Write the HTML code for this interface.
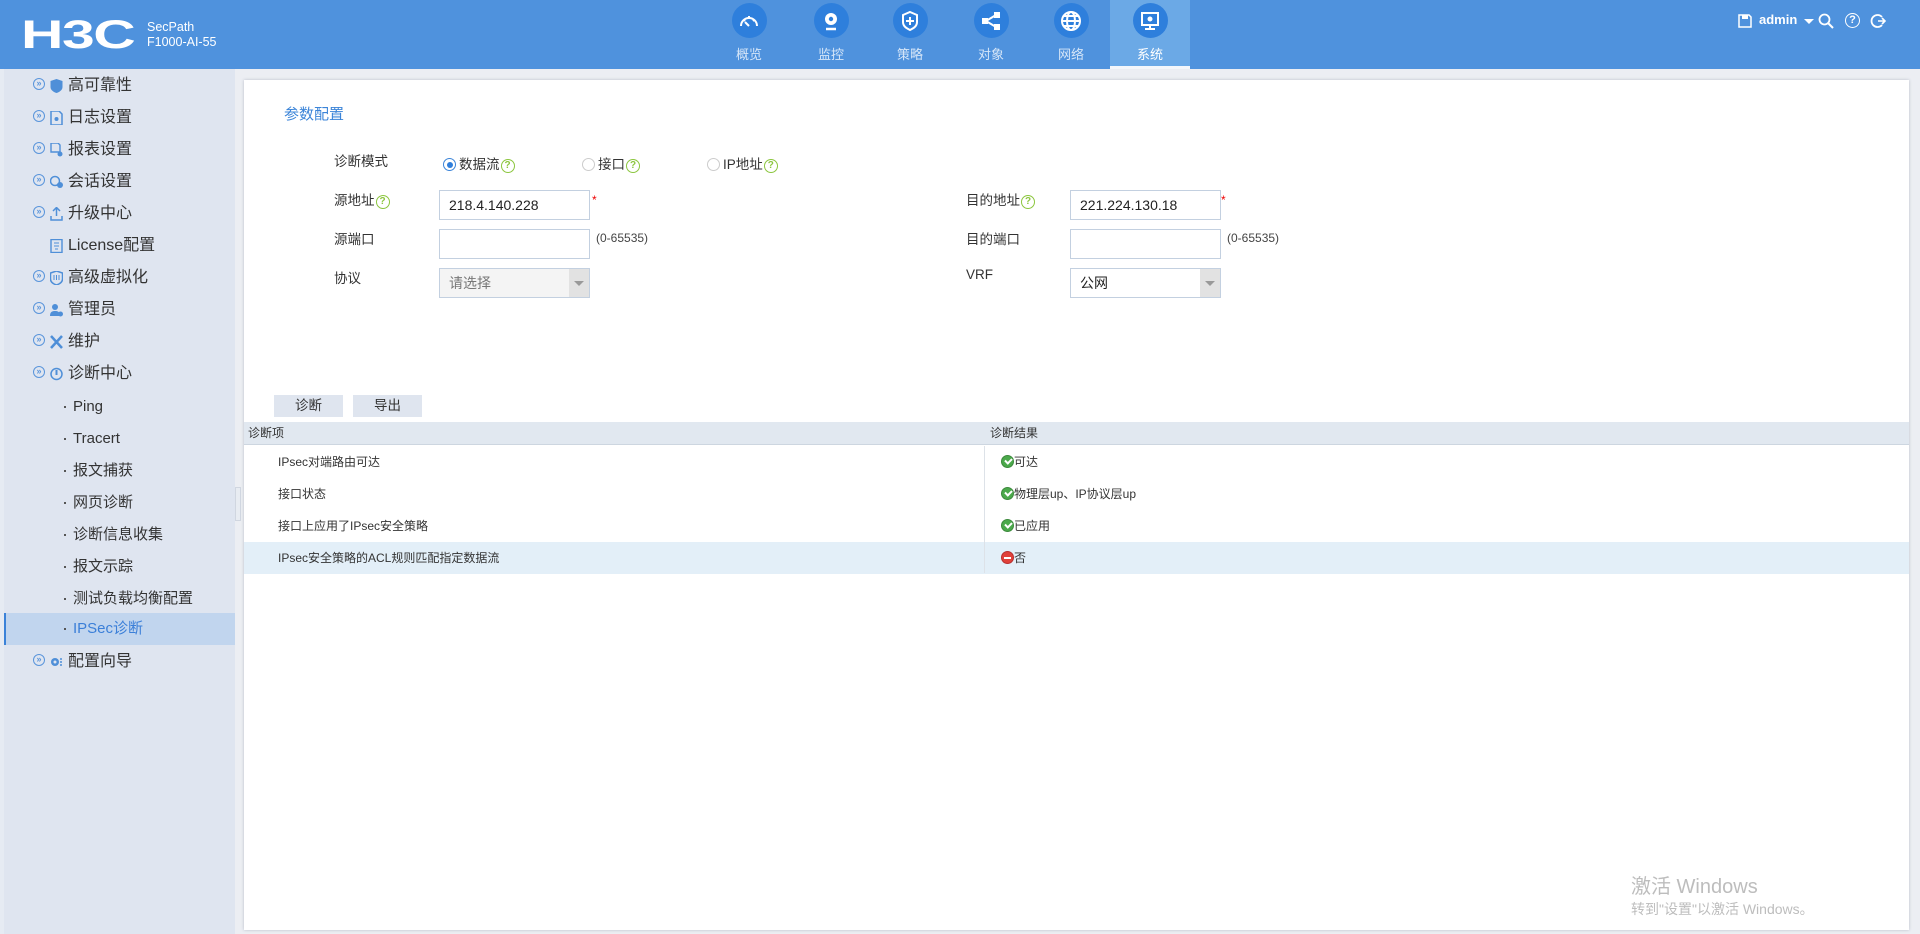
<!DOCTYPE html>
<html><head><meta charset="utf-8">
<style>
*{margin:0;padding:0;box-sizing:border-box}
body{width:1920px;height:934px;overflow:hidden;background:#eceef3;font-family:"Liberation Sans","Noto Sans CJK SC",sans-serif;color:#333;position:relative}
.hdr{position:absolute;left:0;top:0;width:1920px;height:69px;background:#4f92dd}
.abs{position:absolute}
.logo{left:21px;top:13px;font:bold 40px "Liberation Sans",sans-serif;color:#fff;letter-spacing:-1px;transform:scaleX(1.47);transform-origin:left}
.sp{left:147px;top:20px;color:#fff;font-size:12.5px;line-height:15px}
.nav{top:0;width:80px;height:69px;text-align:center;color:#d6e6f8;font-size:13px}
.nav .c{width:35px;height:35px;border-radius:50%;background:#2e7fdc;margin:3px auto 0;display:flex;align-items:center;justify-content:center}
.nav .t{margin-top:6px}
.nav.act{background:#6ba9e6;color:#fff;border-bottom:3px solid #f4f7fb}
.side{left:0;top:69px;width:235px;height:865px;background:#dfe5f0}
.it{position:absolute;left:0;width:235px;height:32px;font-size:16px;line-height:32px;color:#333}
.it .a{position:absolute;left:33px;top:8px;width:12px;height:12px;border:1.3px solid #5a95db;border-radius:50%;font-size:9px;line-height:9px;text-align:center;color:#5a95db;font-weight:bold}
.it .i{position:absolute;left:50px;top:9px;width:13px;height:14px}
.it .x{position:absolute;left:68px}
.sub{font-size:15px}
.sub .x{left:73px}
.sub .d{position:absolute;left:64px;top:15px;width:2px;height:2px;background:#555}
.main{left:244px;top:80px;width:1665px;height:850px;background:#fff;box-shadow:0 0 3px #b8bec8}
.lbl{font-size:13.5px;color:#333}
.inp{background:#fff;border:1px solid #c3d0e0;height:30px;width:151px;font-size:14px;line-height:28px;padding-left:9px;color:#222}
.sel{background:#f4f4f4}
.arr{position:absolute;right:0;top:0;width:20px;height:28px;background:#e2e2e2}
.arr:after{content:"";position:absolute;left:5px;top:12px;border:5px solid transparent;border-top:5px solid #999;border-bottom:0}
.q{display:inline-block;width:14px;height:14px;border:1.5px solid #8cc63f;border-radius:50%;color:#8cc63f;font-size:10px;line-height:11px;text-align:center;font-weight:bold;vertical-align:1px;margin-left:1px}
.rad{display:inline-block;width:13px;height:13px;border:1px solid #ccc;border-radius:50%;vertical-align:-2px;margin-right:3px;position:relative}
.rad.on{border-color:#3b84d8}
.rad.on:after{content:"";position:absolute;left:2.5px;top:2.5px;width:6px;height:6px;border-radius:50%;background:#2f7edb}
.btn{background:#dfe5ef;width:69px;height:22px;font-size:13.5px;text-align:center;line-height:22px;color:#333}
.th{left:244px;top:422px;width:1665px;height:23px;background:#e1e8f0;border-bottom:1px solid #cdd6e0;font-size:12px;line-height:22px}
.row{left:244px;width:1665px;height:32px;font-size:12px;line-height:32px}
.ok,.no{display:inline-block;width:13px;height:13px;border-radius:50%;vertical-align:-2px;position:relative}
.ok{background:#4ba94b;border:1px solid #3d8a3d}
.ok:after{content:"";position:absolute;left:3px;top:2px;width:5px;height:3px;border-left:2px solid #fff;border-bottom:2px solid #fff;transform:rotate(-45deg)}
.no{background:#e0413a;border:1px solid #b83030}
.no:after{content:"";position:absolute;left:2px;top:4.5px;width:7px;height:2px;background:#fff}
.ic{stroke:#fff;fill:none;stroke-width:2}
</style></head><body>
<div class="hdr"></div>
<div class="abs logo">H3C</div>
<div class="abs sp">SecPath<br>F1000-AI-55</div>

<div class="abs nav" style="left:709px"><div class="c"><svg width="22" height="22" viewBox="0 0 22 22"><path class="ic" d="M3 16a8 8 0 1 1 16 0"/><path class="ic" d="M11 16l-4-4"/><path class="ic" d="M6 10l1 1M11 6v2M16 10l-1 1"/></svg></div><div class="t">概览</div></div>
<div class="abs nav" style="left:791px"><div class="c"><svg width="22" height="22" viewBox="0 0 22 22"><circle cx="11" cy="9" r="6" fill="#fff"/><circle cx="11" cy="9" r="2.2" fill="#2e7fdc"/><path d="M6 19h10" stroke="#fff" stroke-width="2.5"/></svg></div><div class="t">监控</div></div>
<div class="abs nav" style="left:870px"><div class="c"><svg width="22" height="22" viewBox="0 0 22 22"><path class="ic" d="M11 2l7 3v7c0 4-3 6-7 8-4-2-7-4-7-8V5z"/><path class="ic" d="M11 7v8M7 11h8"/></svg></div><div class="t">策略</div></div>
<div class="abs nav" style="left:951px"><div class="c"><svg width="22" height="22" viewBox="0 0 22 22"><rect x="2" y="8" width="6" height="6" fill="#fff"/><rect x="14" y="2" width="6" height="6" fill="#fff"/><rect x="14" y="14" width="6" height="6" fill="#fff"/><path class="ic" d="M6 11l10-6M6 11l10 6"/></svg></div><div class="t">对象</div></div>
<div class="abs nav" style="left:1031px"><div class="c"><svg width="24" height="24" viewBox="0 0 24 24"><circle class="ic" cx="12" cy="12" r="9"/><ellipse class="ic" cx="12" cy="12" rx="4" ry="9"/><path class="ic" d="M3 12h18M5 7h14M5 17h14"/></svg></div><div class="t">网络</div></div>
<div class="abs nav act" style="left:1110px"><div class="c"><svg width="22" height="22" viewBox="0 0 22 22"><rect class="ic" x="3" y="3" width="16" height="12"/><circle cx="11" cy="9" r="2.5" fill="#fff"/><path class="ic" d="M11 15v4M6 19h10"/></svg></div><div class="t">系统</div></div>

<svg class="abs" style="left:1738px;top:14px" width="14" height="14" viewBox="0 0 14 14"><path d="M1 1h10l2 2v10H1z" fill="none" stroke="#fff" stroke-width="1.5"/><rect x="4" y="1" width="6" height="4" fill="#fff"/></svg>
<div class="abs" style="left:1759px;top:12px;color:#fff;font-size:13px;font-weight:bold">admin</div>
<div class="abs" style="left:1804px;top:19px;border:5px solid transparent;border-top:5px solid #fff;border-bottom:0"></div>
<svg class="abs" style="left:1818px;top:13px" width="16" height="16" viewBox="0 0 16 16"><circle cx="6.5" cy="6.5" r="5" fill="none" stroke="#fff" stroke-width="1.8"/><path d="M10 10l5 5" stroke="#fff" stroke-width="2"/></svg>
<div class="abs" style="left:1845px;top:13px;width:15px;height:15px;border:1.5px solid #fff;border-radius:50%;color:#fff;font-size:11px;line-height:12px;text-align:center;font-weight:bold">?</div>
<svg class="abs" style="left:1870px;top:13px" width="16" height="16" viewBox="0 0 16 16"><path d="M12 4A6 6 0 1 0 12 12" fill="none" stroke="#fff" stroke-width="1.8"/><path d="M8 8h7M12 5l3 3-3 3" fill="none" stroke="#fff" stroke-width="1.6"/></svg>

<div class="abs side"></div>
<div class="abs" style="left:0;top:69px;width:4px;height:865px;background:#e6ebf3"></div>
<div class="abs" style="left:235px;top:487px;width:6px;height:34px;background:#e8ecf2;border:1px solid #d0d6e0"></div>

<div class="it" style="top:70px"><span class="a">»</span><svg class="i" viewBox="0 0 13 14"><path d="M6.5 0l6 2v6c0 3-3 5-6 6-3-1-6-3-6-6V2z" fill="#4f8fd8"/></svg><span class="x">高可靠性</span></div>
<div class="it" style="top:102px"><span class="a">»</span><svg class="i" viewBox="0 0 13 14"><path d="M1 0h8l3 3v11H1z" fill="none" stroke="#4f8fd8" stroke-width="1.5"/><circle cx="6.5" cy="8" r="2" fill="#4f8fd8"/></svg><span class="x">日志设置</span></div>
<div class="it" style="top:134px"><span class="a">»</span><svg class="i" viewBox="0 0 13 14"><path d="M1 0h7l2 2v7H1z" fill="none" stroke="#4f8fd8" stroke-width="1.4"/><circle cx="10" cy="11" r="2.5" fill="#4f8fd8"/></svg><span class="x">报表设置</span></div>
<div class="it" style="top:166px"><span class="a">»</span><svg class="i" viewBox="0 0 13 14"><circle cx="5" cy="6" r="4.5" fill="none" stroke="#4f8fd8" stroke-width="1.5"/><circle cx="10" cy="10" r="3" fill="#4f8fd8"/></svg><span class="x">会话设置</span></div>
<div class="it" style="top:198px"><span class="a">»</span><svg class="i" viewBox="0 0 13 14"><path d="M6.5 1v8M3 4l3.5-3.5L10 4M1 9v4h11V9" fill="none" stroke="#4f8fd8" stroke-width="1.5"/></svg><span class="x">升级中心</span></div>
<div class="it" style="top:230px"><svg class="i" viewBox="0 0 13 14"><rect x="1" y="0.5" width="11" height="13" fill="none" stroke="#4f8fd8" stroke-width="1.4"/><path d="M4 4h5M4 7h5M5 10h3" stroke="#4f8fd8"/></svg><span class="x">License配置</span></div>
<div class="it" style="top:262px"><span class="a">»</span><svg class="i" viewBox="0 0 13 14"><path d="M6.5 0l6 2v6c0 3-3 5-6 6-3-1-6-3-6-6V2z" fill="none" stroke="#4f8fd8" stroke-width="1.5"/><path d="M4 4v5M6.5 4v5M9 4v5" stroke="#4f8fd8"/></svg><span class="x">高级虚拟化</span></div>
<div class="it" style="top:294px"><span class="a">»</span><svg class="i" viewBox="0 0 13 14"><circle cx="5" cy="4" r="3" fill="#4f8fd8"/><path d="M0 13c0-4 2-5 5-5s4 1 4 2v3z" fill="#4f8fd8"/><circle cx="10.5" cy="11" r="2.5" fill="#4f8fd8"/></svg><span class="x">管理员</span></div>
<div class="it" style="top:326px"><span class="a">»</span><svg class="i" viewBox="0 0 13 14"><path d="M1 1l11 12M12 1L1 13" stroke="#4f8fd8" stroke-width="2.5"/></svg><span class="x">维护</span></div>
<div class="it" style="top:358px"><span class="a">»</span><svg class="i" viewBox="0 0 13 14"><circle cx="6.5" cy="7" r="5.5" fill="none" stroke="#4f8fd8" stroke-width="1.5"/><path d="M6.5 3v5" stroke="#4f8fd8" stroke-width="2"/></svg><span class="x">诊断中心</span></div>
<div class="it sub" style="top:391px"><span class="d"></span><span class="x">Ping</span></div>
<div class="it sub" style="top:423px"><span class="d"></span><span class="x">Tracert</span></div>
<div class="it sub" style="top:455px"><span class="d"></span><span class="x">报文捕获</span></div>
<div class="it sub" style="top:487px"><span class="d"></span><span class="x">网页诊断</span></div>
<div class="it sub" style="top:519px"><span class="d"></span><span class="x">诊断信息收集</span></div>
<div class="it sub" style="top:551px"><span class="d"></span><span class="x">报文示踪</span></div>
<div class="it sub" style="top:583px"><span class="d"></span><span class="x">测试负载均衡配置</span></div>
<div class="it sub" style="top:613px;left:4px;width:231px;background:#c1d5ee;border-left:2px solid #3b82d8;color:#3b7fd8"><span class="d" style="left:58px"></span><span class="x" style="left:67px">IPSec诊断</span></div>
<div class="it" style="top:646px"><span class="a">»</span><svg class="i" viewBox="0 0 13 14"><circle cx="5" cy="7" r="4" fill="#4f8fd8"/><circle cx="5" cy="7" r="1.5" fill="#dfe5f0"/><path d="M11 3v2M11 6v2M11 9v2" stroke="#4f8fd8" stroke-width="1.5"/></svg><span class="x">配置向导</span></div>

<div class="abs main"></div>
<div class="abs" style="left:284px;top:103px;color:#3b84d8;font-size:15px">参数配置</div>

<div class="abs lbl" style="left:334px;top:150px">诊断模式</div>
<div class="abs lbl" style="left:443px;top:153px"><span class="rad on"></span>数据流<span class="q">?</span></div>
<div class="abs lbl" style="left:582px;top:153px"><span class="rad"></span>接口<span class="q">?</span></div>
<div class="abs lbl" style="left:707px;top:153px"><span class="rad"></span>IP地址<span class="q">?</span></div>

<div class="abs lbl" style="left:334px;top:189px">源地址<span class="q">?</span></div>
<div class="abs inp" style="left:439px;top:190px">218.4.140.228</div>
<div class="abs" style="left:592px;top:193px;color:#e00;font-size:12px">*</div>
<div class="abs lbl" style="left:334px;top:228px">源端口</div>
<div class="abs inp" style="left:439px;top:229px"></div>
<div class="abs" style="left:596px;top:231px;font-size:12px;color:#444">(0-65535)</div>
<div class="abs lbl" style="left:334px;top:267px">协议</div>
<div class="abs inp sel" style="left:439px;top:268px;color:#777">请选择<span class="arr"></span></div>

<div class="abs lbl" style="left:966px;top:189px">目的地址<span class="q">?</span></div>
<div class="abs inp" style="left:1070px;top:190px">221.224.130.18</div>
<div class="abs" style="left:1221px;top:193px;color:#e00;font-size:12px">*</div>
<div class="abs lbl" style="left:966px;top:228px">目的端口</div>
<div class="abs inp" style="left:1070px;top:229px"></div>
<div class="abs" style="left:1227px;top:231px;font-size:12px;color:#444">(0-65535)</div>
<div class="abs lbl" style="left:966px;top:267px">VRF</div>
<div class="abs inp" style="left:1070px;top:268px">公网<span class="arr"></span></div>

<div class="abs btn" style="left:274px;top:395px">诊断</div>
<div class="abs btn" style="left:353px;top:395px">导出</div>

<div class="abs th"><span style="position:absolute;left:4px">诊断项</span><span style="position:absolute;left:746px">诊断结果</span></div>
<div class="abs" style="left:984px;top:446px;width:1px;height:127px;background:#dde2e8"></div>
<div class="abs row" style="top:446px"><span style="position:absolute;left:34px">IPsec对端路由可达</span><span style="position:absolute;left:757px"><span class="ok"></span>可达</span></div>
<div class="abs row" style="top:478px"><span style="position:absolute;left:34px">接口状态</span><span style="position:absolute;left:757px"><span class="ok"></span>物理层up、IP协议层up</span></div>
<div class="abs row" style="top:510px"><span style="position:absolute;left:34px">接口上应用了IPsec安全策略</span><span style="position:absolute;left:757px"><span class="ok"></span>已应用</span></div>
<div class="abs row" style="top:542px;background:#e3eff8"><span style="position:absolute;left:34px">IPsec安全策略的ACL规则匹配指定数据流</span><span style="position:absolute;left:757px"><span class="no"></span>否</span></div>
<div class="abs" style="left:984px;top:542px;width:1px;height:31px;background:#dde2e8"></div>

<div class="abs" style="left:1631px;top:870px;color:#bdbdbd;font-size:20px">激活 Windows</div>
<div class="abs" style="left:1631px;top:899px;color:#bdbdbd;font-size:14px">转到"设置"以激活 Windows。</div>
</body></html>
